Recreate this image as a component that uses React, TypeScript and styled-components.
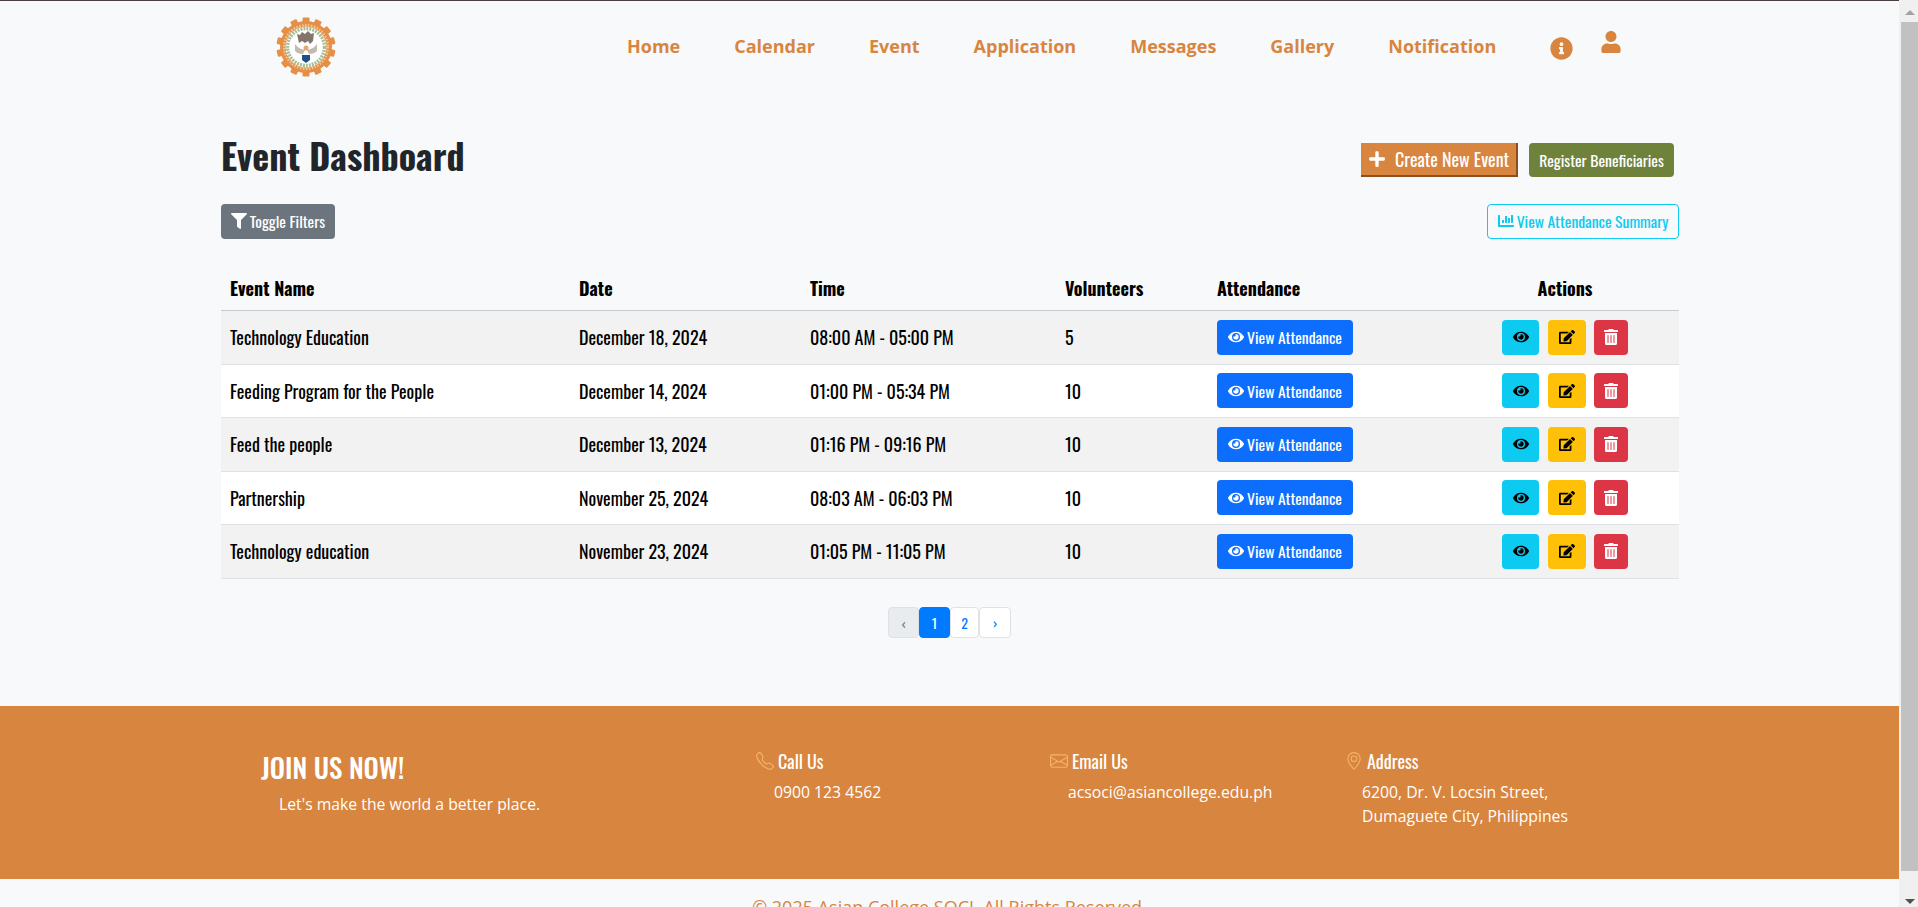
import styled, { createGlobalStyle } from 'styled-components';
import { FaChartBar, FaEdit, FaEye, FaFilter, FaInfoCircle, FaPlus, FaTrashAlt, FaUser } from 'react-icons/fa';
import { BsEnvelope, BsGeoAlt, BsTelephone } from 'react-icons/bs';

const condensed = `'Oswald', 'Liberation Sans Narrow', 'Liberation Sans', sans-serif`;
const orange = '#d8853f';

const events = [
  { name: 'Technology Education', date: 'December 18, 2024', time: '08:00 AM - 05:00 PM', volunteers: 5 },
  { name: 'Feeding Program for the People', date: 'December 14, 2024', time: '01:00 PM - 05:34 PM', volunteers: 10 },
  { name: 'Feed the people', date: 'December 13, 2024', time: '01:16 PM - 09:16 PM', volunteers: 10 },
  { name: 'Partnership', date: 'November 25, 2024', time: '08:03 AM - 06:03 PM', volunteers: 10 },
  { name: 'Technology education', date: 'November 23, 2024', time: '01:05 PM - 11:05 PM', volunteers: 10 },
];

const navItems = ['Home', 'Calendar', 'Event', 'Application', 'Messages', 'Gallery', 'Notification'];

const teeth = Array.from({ length: 14 }, (_, i) => (i * 360) / 14);

function Logo() {
  return (
    <svg width="60" height="60" viewBox="0 0 60 60">
      {teeth.map((angle) => (
        <rect key={angle} x="26.5" y="0.5" width="7" height="6" rx="1" fill="#e58f47" transform={`rotate(${angle} 30 30)`} />
      ))}
      <circle cx="30" cy="30" r="26" fill="#e58f47" />
      <circle cx="30" cy="30" r="22" fill="none" stroke="#f2c9a2" strokeWidth="2" strokeDasharray="1.5 1.5" />
      <circle cx="30" cy="30" r="20.5" fill="#fff" />
      <circle cx="30" cy="30" r="18.5" fill="none" stroke="#a9bd94" strokeWidth="3.5" strokeDasharray="2 1" />
      <circle cx="30" cy="30" r="16" fill="#fff" />
      <path d="M21 17l3 1 2-3 3 2 3-3 3 3 3-1-1 8-3 3-2-3-3 2-3-2-3 2z" fill="#85746a" />
      <path d="M19 27c3 4 6 5 10 6l-2 4c-4 0-6-1-8-3zM41 27c-3 4-6 5-10 6l2 4c4 0 6-1 8-3z" fill="#c5bab0" />
      <circle cx="30" cy="31" r="2.5" fill="#e8a56c" />
      <path d="M26 38h8v5l-4 3-4-3z" fill="#1e4f8a" />
    </svg>
  );
}

export default function App() {
  return (
    <>
      <GlobalStyle />
      <ScrollRail>
        <ScrollArrow $up />
        <ScrollThumb />
        <ScrollArrow />
      </ScrollRail>
      <TopBar>
        <LogoSlot>
          <Logo />
        </LogoSlot>
        <NavList>
          {navItems.map((item) => (
            <NavLink key={item}>{item}</NavLink>
          ))}
        </NavList>
        <InfoIcon>
          <FaInfoCircle />
        </InfoIcon>
        <UserIcon>
          <FaUser />
        </UserIcon>
      </TopBar>

      <Main>
        <TitleRow>
          <Title>Event Dashboard</Title>
          <TitleActions>
            <CreateButton>
              <FaPlus />
              Create New Event
            </CreateButton>
            <RegisterButton>Register Beneficiaries</RegisterButton>
          </TitleActions>
        </TitleRow>

        <FilterRow>
          <ToggleButton>
            <FaFilter />
            Toggle Filters
          </ToggleButton>
          <SummaryButton>
            <FaChartBar />
            View Attendance Summary
          </SummaryButton>
        </FilterRow>

        <Table>
          <colgroup>
            <col width="350" />
            <col width="231" />
            <col width="255" />
            <col width="152" />
            <col width="242" />
            <col width="228" />
          </colgroup>
          <thead>
            <tr>
              <HeadCell>Event Name</HeadCell>
              <HeadCell>Date</HeadCell>
              <HeadCell>Time</HeadCell>
              <HeadCell>Volunteers</HeadCell>
              <HeadCell>Attendance</HeadCell>
              <ActionsHead>Actions</ActionsHead>
            </tr>
          </thead>
          <tbody>
            {events.map((event, index) => (
              <Row key={index} $striped={index % 2 === 0}>
                <Cell>{event.name}</Cell>
                <Cell>{event.date}</Cell>
                <Cell>{event.time}</Cell>
                <Cell>{event.volunteers}</Cell>
                <Cell>
                  <AttendanceButton>
                    <FaEye />
                    View Attendance
                  </AttendanceButton>
                </Cell>
                <Cell>
                  <ActionGroup>
                    <IconButton $bg="#0dcaf0" $color="#000" $width={37}>
                      <FaEye />
                    </IconButton>
                    <IconButton $bg="#ffc107" $color="#000" $width={38}>
                      <FaEdit />
                    </IconButton>
                    <IconButton $bg="#dc3545" $color="#fff" $width={34}>
                      <FaTrashAlt />
                    </IconButton>
                  </ActionGroup>
                </Cell>
              </Row>
            ))}
          </tbody>
        </Table>

        <Pagination>
          <PageItem $disabled $width={31}>‹</PageItem>
          <PageItem $active $width={31}>1</PageItem>
          <PageItem $width={29}>2</PageItem>
          <PageItem $width={32}>›</PageItem>
        </Pagination>
      </Main>

      <Footer>
        <JoinColumn>
          <JoinTitle>JOIN US NOW!</JoinTitle>
          <JoinText>Let's make the world a better place.</JoinText>
        </JoinColumn>
        <FooterColumn>
          <FooterHeading>
            <BsTelephone />
            Call Us
          </FooterHeading>
          <FooterText $indent={18}>0900 123 4562</FooterText>
        </FooterColumn>
        <FooterColumn>
          <FooterHeading>
            <BsEnvelope />
            Email Us
          </FooterHeading>
          <FooterText $indent={18}>acsoci@asiancollege.edu.ph</FooterText>
        </FooterColumn>
        <FooterColumn>
          <FooterHeading>
            <BsGeoAlt />
            Address
          </FooterHeading>
          <FooterText $indent={17}>
            6200, Dr. V. Locsin Street,
            <br />
            Dumaguete City, Philippines
          </FooterText>
        </FooterColumn>
      </Footer>
      <Copyright>© 2025 Asian College SOCI. All Rights Reserved.</Copyright>
    </>
  );
}

const GlobalStyle = createGlobalStyle`
  body {
    margin: 0 19px 0 0;
    background: #f8f9fa;
    color: #212529;
    font-family: 'Open Sans', sans-serif;
    font-size: 16px;
  }
`;

const ScrollRail = styled.div`
  position: fixed;
  top: 0;
  right: 0;
  bottom: 0;
  display: flex;
  flex-direction: column;
  width: 17px;
  padding-left: 2px;
  background: #f0f0f0;
`;

const ScrollArrow = styled.div<{ $up?: boolean }>`
  flex: none;
  box-sizing: content-box;
  width: 0;
  height: 0;
  margin: ${(props) => (props.$up ? '10px auto 7px' : '28px auto 0')};
  border-left: 5px solid transparent;
  border-right: 5px solid transparent;
  border-top: ${(props) => (props.$up ? 'none' : '5px solid #505050')};
  border-bottom: ${(props) => (props.$up ? '5px solid #a3a3a3' : 'none')};
`;

const ScrollThumb = styled.div`
  flex: none;
  height: 849px;
  background: #c1c1c1;
`;

const TopBar = styled.header`
  display: flex;
  align-items: center;
  height: 90px;
  padding: 0 0 0 276px;
  border-top: 1px solid #4a3f3f;
  box-sizing: border-box;
`;

const LogoSlot = styled.div`
  display: flex;
  width: 351px;
  margin-top: 2px;
`;

const NavList = styled.nav`
  display: flex;
  gap: 54px;
`;

const NavLink = styled.a`
  font-size: 18px;
  font-weight: 700;
  color: ${orange};
`;

const InfoIcon = styled.span`
  display: flex;
  margin: 5px 0 0 54px;
  font-size: 23px;
  color: ${orange};
`;

const UserIcon = styled.span`
  display: flex;
  margin: -7px 0 0 27px;
  font-size: 22px;
  color: ${orange};
`;

const Main = styled.main`
  width: 1458px;
  margin: 0 0 0 221px;
  padding-bottom: 68px;
`;

const TitleRow = styled.div`
  display: flex;
  justify-content: space-between;
  align-items: center;
  height: 60px;
  margin-top: 40px;
`;

const Title = styled.h1`
  margin: 0 0 11px;
  font-family: ${condensed};
  font-size: 36px;
  font-weight: 700;
`;

const TitleActions = styled.div`
  display: flex;
  gap: 11px;
  padding-right: 5px;
`;

const baseButton = `
  display: inline-flex;
  align-items: center;
  justify-content: center;
  box-sizing: border-box;
  font-family: ${condensed};
  color: #fff;
  white-space: nowrap;
`;

const smallButton = `
  ${baseButton}
  font-size: 15.7px;

  svg {
    font-size: 16px;
  }
`;

const CreateButton = styled.a`
  ${baseButton}
  gap: 9px;
  width: 157px;
  height: 34px;
  font-size: 18px;
  background: ${orange};
  border-right: 2px solid #8a5020;
  border-bottom: 2px solid #8a5020;
`;

const RegisterButton = styled.a`
  ${smallButton}
  width: 145px;
  height: 34px;
  background: #6f823c;
  border-radius: 4px;
`;

const FilterRow = styled.div`
  display: flex;
  justify-content: space-between;
  margin-top: 14px;
`;

const ToggleButton = styled.a`
  ${smallButton}
  gap: 3px;
  width: 114px;
  height: 35px;
  padding-bottom: 2px;
  background: #6c757d;
  border-radius: 4px;
`;

const SummaryButton = styled.a`
  ${smallButton}
  gap: 3px;
  width: 192px;
  height: 35px;
  padding-bottom: 2px;
  color: #0dcaf0;
  border: 1px solid #0dcaf0;
  border-radius: 4px;
`;

const Table = styled.table`
  width: 100%;
  margin-top: 28px;
  border-collapse: collapse;
  table-layout: fixed;
  font-family: ${condensed};
  color: #000;

  th:first-child,
  td:first-child {
    padding-left: 9px;
  }
`;

const HeadCell = styled.th`
  height: 43.5px;
  padding: 0 8px 2px;
  box-sizing: border-box;
  font-size: 18px;
  font-weight: 700;
  text-align: left;
  border-bottom: 1px solid #c8cacc;
`;

const ActionsHead = styled(HeadCell)`
  text-align: center;
`;

const Row = styled.tr<{ $striped?: boolean }>`
  background: ${(props) => (props.$striped ? '#f2f2f2' : '#fff')};
  border-bottom: 1px solid #dee2e6;
`;

const Cell = styled.td`
  height: 52.5px;
  padding: 0 8px;
  font-size: 18px;
  white-space: nowrap;
`;

const AttendanceButton = styled.a`
  ${smallButton}
  gap: 3px;
  width: 136px;
  height: 35px;
  background: #0d6efd;
  border-radius: 4px;
`;

const ActionGroup = styled.div`
  display: flex;
  justify-content: center;
  gap: 8.5px;
`;

const IconButton = styled.a<{ $bg: string; $color: string; $width: number }>`
  ${baseButton}
  width: ${(props) => props.$width}px;
  height: 35px;
  font-size: 16px;
  color: ${(props) => props.$color};
  background: ${(props) => props.$bg};
  border-radius: 4px;
`;

const Pagination = styled.div`
  display: flex;
  justify-content: center;
  margin: 28.5px 0 0;
  padding-right: 1px;
`;

const PageItem = styled.a<{ $active?: boolean; $disabled?: boolean; $width: number }>`
  ${baseButton}
  width: ${(props) => props.$width}px;
  height: 31px;
  font-size: 14px;
  color: ${(props) => (props.$active ? '#fff' : props.$disabled ? '#6c757d' : '#007bff')};
  background: ${(props) => (props.$active ? '#007bff' : props.$disabled ? '#e9ecef' : '#fff')};
  border: 1px solid ${(props) => (props.$active ? '#007bff' : '#dee2e6')};
  border-radius: 4px;
`;

const Footer = styled.footer`
  display: grid;
  grid-template-columns: 495px 294px 295px 1fr;
  height: 173px;
  padding: 42px 0 0 261px;
  box-sizing: border-box;
  background: ${orange};
  color: #fff;
`;

const JoinColumn = styled.div`
  display: flex;
  flex-direction: column;
`;

const JoinTitle = styled.h2`
  margin: -1px 0 0;
  font-family: ${condensed};
  font-size: 27px;
  font-weight: 500;
`;

const JoinText = styled.p`
  margin: 6px 0 0 18px;
  font-size: 15.75px;
`;

const FooterColumn = styled.div`
  display: flex;
  flex-direction: column;
`;

const FooterHeading = styled.div`
  display: flex;
  align-items: center;
  gap: 4px;
  font-family: ${condensed};
  font-size: 18px;
  font-weight: 400;

  svg {
    font-size: 18px;
    color: #f5b26b;
  }
`;

const FooterText = styled.p<{ $indent: number }>`
  margin: 6px 0 0 ${(props) => props.$indent}px;
  font-size: 15.75px;
  line-height: 24px;
`;

const Copyright = styled.p`
  margin: 0;
  padding: 16px 0 30px;
  text-align: center;
  font-size: 18px;
  color: ${orange};
`;
